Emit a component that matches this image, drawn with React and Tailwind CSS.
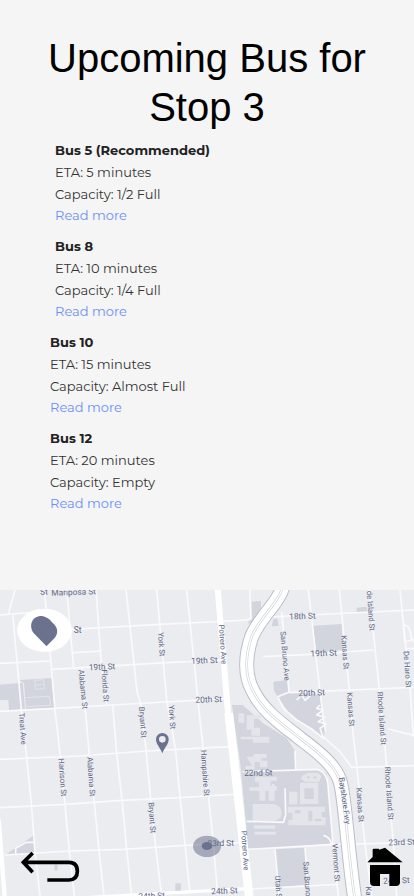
import React from "react";

const buses = [
  { name: "Bus 5 (Recommended)", eta: "5 minutes", capacity: "1/2 Full", indent: true },
  { name: "Bus 8", eta: "10 minutes", capacity: "1/4 Full", indent: true },
  { name: "Bus 10", eta: "15 minutes", capacity: "Almost Full", indent: false },
  { name: "Bus 12", eta: "20 minutes", capacity: "Empty", indent: false },
];

// Parks, lots and campus grounds
const areas = [
  "M0 314 68 308 75 388 27 390 25 360 0 360Z",
  "M58 300 155 294 163 385 78 388 72 310Z",
  "M755 65 783 63 783 95 760 132 743 130 755 112Z",
  "M815 139 820 117 832 115 836 138Z",
  "M940 137 1025 132 1028 210 945 215Z",
  "M1070 83 1100 80 1102 95 1070 97Z",
  "M820 305 860 300 865 335 833 350 822 332Z",
  "M833 350 868 336 960 345 965 385 975 450 970 472 935 447 875 410Z",
  "M696 375 728 375 790 430 860 475 885 512 887 568 960 568 980 583 1000 790 745 810 722 560Z",
  "M825 808 915 803 920 914 833 922Z",
  "M15 825 102 766 104 818Z",
  "M163 853h10v18h-10Z",
  "M526 910h17v26h-17Z",
];

const streets = [
  "M45 30 25 103",
  "M38 103 57 310 65 400 80 533 95 681 105 818 120 948",
  "M133 30 140 100 150 215 165 390 182 535 195 675 208 815 223 948",
  "M200 30 221 265",
  "M245 265 268 525 283 668 297 812 312 948",
  "M288 30 305 265 320 372",
  "M338 375 350 520 366 660 380 808 395 948",
  "M378 30 403 260 411 335 425 380 437 500 452 655 467 800 485 948",
  "M470 30 500 360 527 510 540 650 555 795 570 938",
  "M560 30 600 420 610 508 625 645 640 790 652 930",
  "M0 105 130 95",
  "M215 148 480 133 630 126 740 120",
  "M740 120 753 116 749 30",
  "M800 112 860 108 1242 90",
  "M218 218 305 213",
  "M0 250 150 243",
  "M157 268 500 248 670 240",
  "M790 230 930 223 1120 210",
  "M0 394 165 385 338 375 600 360 682 355",
  "M868 338 1242 322",
  "M0 538 240 528 440 513 630 503 690 500",
  "M0 683 195 673 365 661 540 653 700 643",
  "M15 825 210 813 370 808 555 796 720 788",
  "M745 808 1005 793 1242 788",
  "M730 928 1015 913",
  "M845 95 868 338",
  "M925 30 970 420 977 455",
  "M1018 30 1052 370 1060 470 1070 555 1095 790 1115 948",
  "M1107 30 1138 330 1155 500 1180 790 1190 948",
  "M1200 30 1230 322 1240 470",
  "M1165 447 1242 466",
  "M1210 136q20-5 24 38l8 12M1210 136l4 50 28-8M1218 206h24",
  "M967 468 1020 515 1055 562 1242 557",
  "M885 512 887 568",
  "M728 575 950 568Q985 575 985 630L1005 860 1015 948",
  "M825 808 838 948M915 803 925 948",
  "M740 724 850 727 857 705 855 625",
  "M970 766Q990 770 995 793",
  "M833 350 868 336 M833 350 850 385 890 420 935 447 970 475 960 445 978 432 955 425 975 412 950 405 970 390 950 385 960 375M890 360l15-15 10 16 20-18",
  "M47 823v-18l32-18h25",
];

const buildings = [
  "M740 530h20v-8h40v12h-16v8h18v20h-22v-16h-16v22h-28v-10h20z",
  "M758 672h65q22 8 22 27t-22 24h-65z",
  "M765 590h65v12h-18v16h18v14h-65v-8h12v-18h-12z",
  "M748 622h68v-10h8v50h-18v-30h-10v30h-18v-30h-30z",
  "M762 736h64v10h-64zM764 755h64v9h-64z",
  "M910 585l14-6h30l10 10-6 16h-44l-12-10z",
  "M900 608h55v64h-55zM863 680h112v16h-10v16h12v24h-112v-16h12v-22h-14z",
  "M867 635h25v38h-25z",
  "M722 470h86v18h-50v-10h-36zM715 400h18v28h-18zM740 405h42v12h-20v26h18v24h-26v-18h-14z",
];

const freeway =
  "M847 25C835 70 780 110 755 170C735 230 735 290 760 335C790 395 850 435 900 475C960 520 1010 560 1022 610C1035 660 1042 800 1064 955";

// [text, center x, center y, rotation]
const labels = [
  ["St", 132, 35, -3],
  ["Mariposa St", 221, 36, -2],
  ["St", 233, 149, 0],
  ["York St", 484, 193, 86],
  ["19th St", 306, 260, -2],
  ["Alabama St", 249, 328, 84],
  ["Florida St", 315, 317, 86],
  ["Treat Ave", 68, 446, 86],
  ["Bryant St", 428, 427, 86],
  ["York St", 516, 411, 86],
  ["19th St", 613, 241, -2],
  ["20th St", 626, 358, -2],
  ["Potrero Ave", 668, 193, 86],
  ["18th St", 907, 108, -2],
  ["San Bruno Ave", 855, 228, 85],
  ["Kansas St", 1035, 217, 86],
  ["19th St", 971, 219, -2],
  ["de Island St", 1112, 92, 86],
  ["De Haro St", 1222, 268, 86],
  ["20th St", 935, 338, -2],
  ["Kansas St", 1052, 388, 86],
  ["Rhode Island St", 1145, 415, 86],
  ["Harrison St", 187, 592, 86],
  ["Alabama St", 273, 590, 86],
  ["Bryant St", 456, 713, 86],
  ["Hampshire St", 615, 579, 86],
  ["24th St", 455, 947, -2],
  ["22nd St", 775, 578, -1],
  ["Bayshore Fwy", 1034, 662, 82],
  ["Kansas St", 1080, 675, 86],
  ["Rhode Island St", 1167, 640, 86],
  ["23rd St", 662, 789, -1],
  ["Potrero Ave", 735, 812, 86],
  ["23rd St", 1205, 786, -2],
  ["Vermont St", 1008, 848, 86],
  ["San Bruno", 921, 897, 86],
  ["Utah St", 835, 924, 86],
  ["24th St", 673, 932, -2],
  ["24th St", 1189, 901, -2],
  ["Kansas St", 1108, 971, 86],
];

function BusCard({ bus }) {
  return (
    <li className={bus.indent ? "pl-[55px]" : "pl-[50px]"}>
      <h2 className="text-[13px] leading-[22px] font-bold text-[#222]">{bus.name}</h2>
      <p>ETA: {bus.eta}</p>
      <p>Capacity: {bus.capacity}</p>
      <a href="#details" className="block leading-5 text-[#6a8ffa]">
        Read more
      </a>
    </li>
  );
}

function StreetMap() {
  return (
    <svg
      viewBox="0 30 1242 918"
      preserveAspectRatio="xMidYMid slice"
      className="block h-full w-full"
      role="img"
      aria-label="Map of nearby streets"
    >
      <rect y="30" width="1242" height="918" fill="#ebecf0" />
      <g fill="#d2d5dd">
        {areas.map((d) => (
          <path key={d} d={d} />
        ))}
      </g>
      <g fill="#e3e5eb">
        {buildings.map((d) => (
          <path key={d} d={d} />
        ))}
      </g>
      <g fill="#d2d5dd">
        <path d="M913 625h28v32h-28zM885 690h16v10h-16zM925 692h12v32h-12zM944 716h20v8h-20z" />
        <circle cx="925" cy="592" r="4" />
        <circle cx="945" cy="592" r="4" />
      </g>
      <g fill="none" stroke="#e3e5eb" strokeWidth="3">
        <path d="M104 301l27-2 2 27-27 2zM106 315l26-2M78 353l70-4 4 27-72 4" />
      </g>
      <g fill="none" stroke="#fafafc" strokeWidth="5" strokeLinejoin="round">
        {streets.map((d) => (
          <path key={d} d={d} />
        ))}
      </g>
      <g fill="none" stroke="#fff">
        <path d="M-4 718 14 948" strokeWidth="13" />
        <path d="M270 952 630 932 745 926" strokeWidth="10" />
        <path d="M653 25 690 470" strokeWidth="18" />
        <path d="M686 400 700 520 748 955" strokeWidth="26" />
      </g>
      <g fill="none">
        <path d={freeway} stroke="#babdca" strokeWidth="45" />
        <path d={freeway} stroke="#fff" strokeWidth="39" />
        <path d={freeway} stroke="#cfd2db" strokeWidth="8" />
        <path d={freeway} stroke="#fff" strokeWidth="4" />
      </g>
      <ellipse cx="621" cy="799" rx="42" ry="32" fill="#6b728e" opacity="0.55" />
      <g
        fill="#5d6684"
        textAnchor="middle"
        dominantBaseline="central"
        className="font-[Roboto,sans-serif]"
      >
        {labels.map(([text, x, y, angle]) => (
          <text
            key={`${text}-${x}`}
            transform={`translate(${x} ${y}) rotate(${angle})`}
            className={angle > 0 ? "text-[23px]" : "text-[25px]"}
          >
            {text}
          </text>
        ))}
      </g>
      <ellipse cx="621" cy="798" rx="16" ry="12" fill="#6b728e" />
      <path
        d="M487 520C482 505 468 494 468 478a19 19 0 0 1 38 0C506 494 492 505 487 520ZM487 468a10 10 0 1 0 0 20a10 10 0 1 0 0-20Z"
        fill="#6b728e"
        fillRule="evenodd"
      />
    </svg>
  );
}

export default function App() {
  return (
    <div className="flex min-h-screen flex-col bg-[#f5f5f5]">
      <main className="flex-1 pt-[34px] pb-6">
        <h1 className="px-10 text-center font-['Liberation_Sans',Arial,sans-serif] text-[40px] leading-[49px] text-black">
          Upcoming Bus for Stop 3
        </h1>
        <ul className="mt-[7px] flex flex-col gap-2.5 font-[Montserrat,Inter,sans-serif] text-[13px] leading-[22px] text-[#333]">
          {buses.map((bus) => (
            <BusCard key={bus.name} bus={bus} />
          ))}
        </ul>
      </main>

      <section className="relative aspect-[414/306] w-full overflow-hidden">
        <StreetMap />
        <button type="button" aria-label="Show stop" className="absolute top-[19px] left-[17px]">
          <svg viewBox="51 87 164 129" className="block h-[43px] w-[55px]">
            <ellipse cx="133" cy="151" rx="82" ry="65" fill="#fff" />
            <path
              d="M139 199 101 160C89 146 90 123 105 113C120 104 135 107 147 118L163 134C173 145 174 160 164 173Z"
              fill="#6b728e"
            />
          </svg>
        </button>
        <button type="button" aria-label="Back" className="absolute bottom-2.5 left-5">
          <svg viewBox="60 810 180 108" className="block h-9 w-15">
            <path
              d="M142 900H207Q232 900 232 874Q232 847 207 847H70M98 819 70 847 98 877"
              fill="none"
              stroke="#000"
              strokeWidth="11"
            />
          </svg>
        </button>
        <button type="button" aria-label="Home" className="absolute right-[11px] bottom-2.5">
          <svg viewBox="1101 801 108 117" className="block h-[39px] w-9">
            <path d="M1102 847 1118 831V809Q1118 806 1121 806H1135Q1138 806 1138 809L1155 803 1208 847Z" />
            <path d="M1110 855H1200V906Q1200 918 1188 918H1168V882H1140V918H1122Q1110 918 1110 906Z" />
          </svg>
        </button>
      </section>
    </div>
  );
}
